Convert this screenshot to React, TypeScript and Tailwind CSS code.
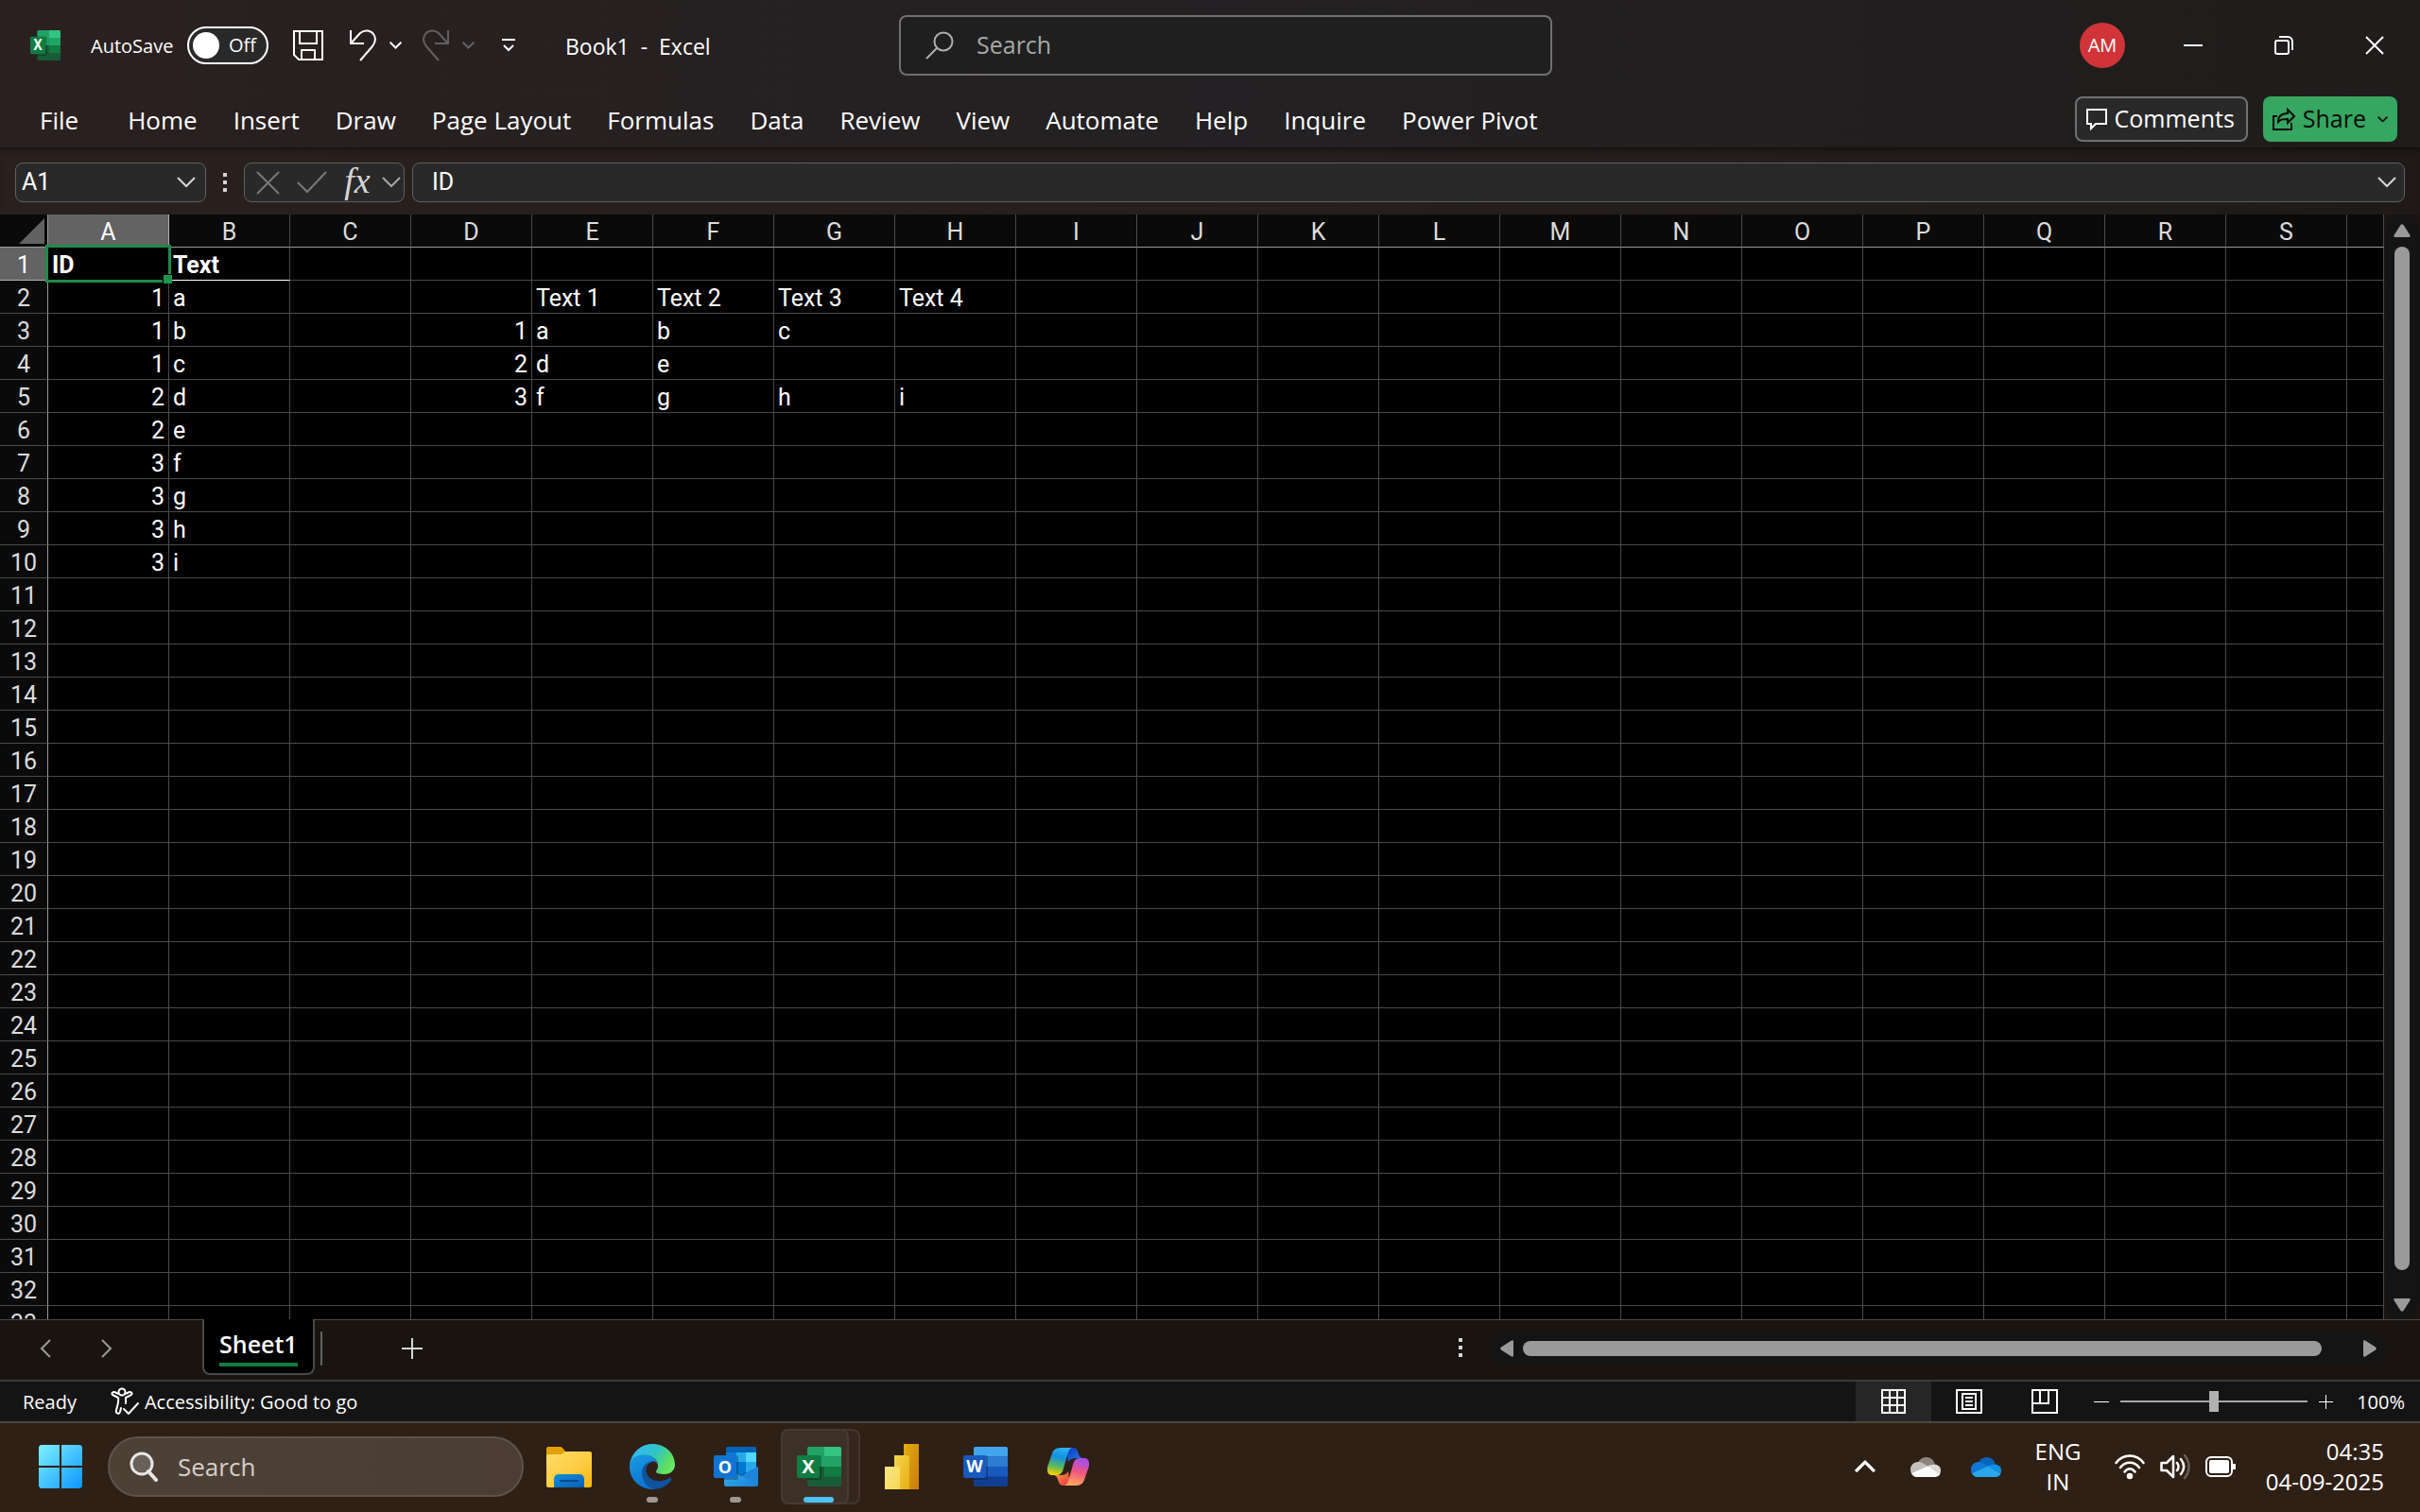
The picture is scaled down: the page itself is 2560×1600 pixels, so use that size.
import React from "react";

const COLS = "ABCDEFGHIJKLMNOPQRS".split("");
const ROWS = Array.from({ length: 33 }, (_, i) => i + 1);

const CELLS: Record<string, string | number> = {
  A1: "ID", B1: "Text",
  A2: 1, B2: "a",
  A3: 1, B3: "b",
  A4: 1, B4: "c",
  A5: 2, B5: "d",
  A6: 2, B6: "e",
  A7: 3, B7: "f",
  A8: 3, B8: "g",
  A9: 3, B9: "h",
  A10: 3, B10: "i",
  E2: "Text 1", F2: "Text 2", G2: "Text 3", H2: "Text 4",
  D3: 1, E3: "a", F3: "b", G3: "c",
  D4: 2, E4: "d", F4: "e",
  D5: 3, E5: "f", F5: "g", G5: "h", H5: "i",
};

const TABS = [
  "File", "Home", "Insert", "Draw", "Page Layout", "Formulas", "Data",
  "Review", "View", "Automate", "Help", "Inquire", "Power Pivot",
];

function Chevron({ className = "", w = 20, sw = 2 }: { className?: string; w?: number; sw?: number }) {
  return (
    <svg width={w} height={w * 0.6} viewBox="0 0 20 12" fill="none" stroke="currentColor" strokeWidth={sw} className={className} aria-hidden="true">
      <path d="M1 1l9 9 9-9" />
    </svg>
  );
}

function ExcelIcon({ className }: { className: string }) {
  return (
    <svg viewBox="0 0 47 42" className={className} aria-hidden="true" preserveAspectRatio="none">
      <rect x="11" y="0" width="36" height="42" rx="2" fill="#185c37" />
      <path d="M13 0h16v21H11V2a2 2 0 0 1 2-2z" fill="#21a366" />
      <path d="M29 0h16a2 2 0 0 1 2 2v8.500H29z" fill="#33c481" />
      <path d="M29 10.500h18V21H29z" fill="#21a366" />
      <path d="M29 21h18v10.500H29z" fill="#107c41" />
      <path d="M11 9h13a2 2 0 0 1 2 2v22a2 2 0 0 1-2 2H11z" fill="#000" opacity=".25" />
      <rect x="0" y="9" width="24" height="24" rx="2" fill="#107c41" />
      <text x="12" y="28" textAnchor="middle" fontSize="20" fontWeight="700" fill="#fff" fontFamily="Open Sans, sans-serif">X</text>
    </svg>
  );
}

function WordIcon() {
  return (
    <svg viewBox="0 0 47 42" className="h-[42px] w-[47px]" aria-hidden="true">
      <rect x="11" y="0" width="36" height="42" rx="2" fill="#103f91" />
      <path d="M13 0h32a2 2 0 0 1 2 2v8.500H11V2a2 2 0 0 1 2-2z" fill="#41a5ee" />
      <path d="M11 10.500h36V21H11z" fill="#2b7cd3" />
      <path d="M11 21h36v10.500H11z" fill="#185abd" />
      <path d="M11 9h13a2 2 0 0 1 2 2v22a2 2 0 0 1-2 2H11z" fill="#000" opacity=".25" />
      <rect x="0" y="9" width="24" height="24" rx="2" fill="#185abd" />
      <text x="12" y="27" textAnchor="middle" fontSize="18" fontWeight="700" fill="#fff" fontFamily="Open Sans, sans-serif">W</text>
    </svg>
  );
}

function OutlookIcon() {
  return (
    <svg viewBox="0 0 47 42" className="h-[42px] w-[47px]" aria-hidden="true">
      <defs>
        <linearGradient id="env" x1="0" y1="0" x2="1" y2="1">
          <stop offset="0" stopColor="#35b8f1" />
          <stop offset="1" stopColor="#1a7fd8" />
        </linearGradient>
      </defs>
      <path d="M15 0h28a2 2 0 0 1 2 2v30H13V2a2 2 0 0 1 2-2z" fill="#0a4a8c" />
      <path d="M15 0h28a2 2 0 0 1 2 2v4H13V2a2 2 0 0 1 2-2z" fill="#0364b8" />
      <path d="M13 6h11v10H13z" fill="#0f78d4" />
      <path d="M24 6h10v10H24z" fill="#28a8ea" />
      <path d="M34 6h11v10H34z" fill="#50d9ff" />
      <path d="M13 16h11v12H13z" fill="#0364b8" />
      <path d="M24 16h10v11l-5 3-5-2z" fill="#0078d4" />
      <path d="M34 16h11v6l-11 6z" fill="#28a8ea" />
      <path d="M47 21v19a2 2 0 0 1-2 2H13a2 2 0 0 1-2-2V21l18 10z" fill="url(#env)" />
      <path d="M29 31l18-10v19z" fill="#1b86dc" />
      <path d="M11 9h13a2 2 0 0 1 2 2v22a2 2 0 0 1-2 2H11z" fill="#000" opacity=".25" />
      <rect x="0" y="9" width="24" height="24" rx="2" fill="#1174d4" />
      <text x="12" y="28" textAnchor="middle" fontSize="18" fontWeight="700" fill="#fff" fontFamily="Open Sans, sans-serif">O</text>
    </svg>
  );
}

function EdgeIcon() {
  return (
    <svg viewBox="0 0 48 48" className="size-12" aria-hidden="true">
      <defs>
        <linearGradient id="edgeTop" x1="0" y1=".3" x2="1" y2=".7">
          <stop offset="0" stopColor="#35b5f5" />
          <stop offset=".5" stopColor="#2fc5c4" />
          <stop offset=".85" stopColor="#5fdf5c" />
          <stop offset="1" stopColor="#66eb6e" />
        </linearGradient>
        <linearGradient id="edgeBlue" x1="0" y1="0" x2=".4" y2="1">
          <stop offset="0" stopColor="#1b9de2" />
          <stop offset="1" stopColor="#0a74d2" />
        </linearGradient>
      </defs>
      <path d="M13 31C12 22 18 17 26 18c-7 2-10 7-8 13 2 6 9 9 16 8 5-.5 8-3 9-3s2 1 1 2.500C40 44 33 48 25 48 18 46 13 39 13 31z" fill="#0f539f" />
      <path d="M0 24C0 15 7 11 14 11c9 0 15 5 15.500 11C28.500 18.500 26 17.500 23 18.500 16 20 13 25 13 31c.500 8 5 14 12 17C11 48 0 38 0 24z" fill="url(#edgeBlue)" />
      <path d="M0 22C2 9 12 0 24 0c14 0 24 10 24 22 0 6-5 10-11 10-5 0-9-1-9-2.500s2-2.500 2-6.500c0-7-7-11.500-15-11.500S1 16 0 22z" fill="url(#edgeTop)" />
    </svg>
  );
}

function FolderIcon() {
  return (
    <svg viewBox="0 0 48 43" className="h-[43px] w-12" aria-hidden="true">
      <defs>
        <linearGradient id="fold" x1="0" y1="0" x2="1" y2="1">
          <stop offset="0" stopColor="#ffdc6b" />
          <stop offset=".6" stopColor="#fdcb3e" />
          <stop offset="1" stopColor="#f6b60f" />
        </linearGradient>
        <linearGradient id="fold2" x1="0" y1="0" x2="1" y2="1">
          <stop offset="0" stopColor="#1390dc" />
          <stop offset="1" stopColor="#0a5eb4" />
        </linearGradient>
      </defs>
      <path d="M0 2a2 2 0 0 1 2-2h12c3 0 4 2 6 5v6H0z" fill="#e3a008" />
      <path d="M0 10a2 2 0 0 1 2-2h13c3 0 3-3 6-3h25a2 2 0 0 1 2 2v34a2 2 0 0 1-2 2H2a2 2 0 0 1-2-2z" fill="url(#fold)" />
      <path d="M8 43V34a5 5 0 0 1 5-5h22a5 5 0 0 1 5 5v9z" fill="url(#fold2)" />
      <path d="M15 36h18" stroke="#07478a" strokeWidth="2" strokeLinecap="round" />
    </svg>
  );
}

function PowerBiIcon() {
  return (
    <svg viewBox="0 0 36 48" className="h-12 w-9" aria-hidden="true">
      <defs>
        <linearGradient id="pb1" x1="0" y1="0" x2="1" y2="1"><stop offset="0" stopColor="#e6ad10" /><stop offset="1" stopColor="#c87a0e" /></linearGradient>
        <linearGradient id="pb2" x1="0" y1="0" x2="1" y2="1"><stop offset="0" stopColor="#f6d751" /><stop offset="1" stopColor="#e6ad10" /></linearGradient>
        <linearGradient id="pb3" x1="0" y1="0" x2="1" y2="1"><stop offset="0" stopColor="#f9e589" /><stop offset="1" stopColor="#f6d751" /></linearGradient>
      </defs>
      <path d="M20 0h16v48H20z" fill="url(#pb1)" />
      <path d="M10 12h14a2 2 0 0 1 2 2v34H10z" fill="url(#pb2)" />
      <path d="M0 24h14a2 2 0 0 1 2 2v22H0z" fill="url(#pb3)" />
    </svg>
  );
}

function CopilotIcon() {
  return (
    <svg viewBox="0 0 44 40" className="h-10 w-11" aria-hidden="true">
      <defs>
        <linearGradient id="cp1" x1=".6" y1="0" x2=".4" y2="1">
          <stop offset="0" stopColor="#2bb3f5" /><stop offset=".35" stopColor="#1290e0" /><stop offset=".7" stopColor="#5cb85a" /><stop offset="1" stopColor="#f5d000" />
        </linearGradient>
        <linearGradient id="cp2" x1="0" y1="0" x2="1" y2="1">
          <stop offset="0" stopColor="#1237c4" /><stop offset="1" stopColor="#1a80e8" />
        </linearGradient>
        <linearGradient id="cp3" x1=".6" y1="0" x2=".4" y2="1">
          <stop offset="0" stopColor="#a04df0" /><stop offset=".5" stopColor="#f0567f" /><stop offset="1" stopColor="#ffa958" />
        </linearGradient>
        <linearGradient id="cp4" x1="0" y1="0" x2="1" y2="1">
          <stop offset="0" stopColor="#ffa04a" /><stop offset="1" stopColor="#e0393e" />
        </linearGradient>
      </defs>
      <path d="M20 0h7c4 0 5 3 6 6.500 1 3 2 4.500 5 4.500h-8c-4 0-6 1-8 4z" fill="url(#cp2)" />
      <path d="M24 40h-7c-4 0-5-3-6-6.500C10 30.500 9 29 6 29h8c4 0 6-1 8-4z" fill="url(#cp4)" />
      <path d="M15 0h11c-3 1-4 4-5 8l-4 14c-1 4-3 7-7 7H5c-5 0-6-5-4.500-10L5 6C6.500 2 9 0 15 0z" fill="url(#cp1)" />
      <path d="M29 40H18c3-1 4-4 5-8l4-14c1-4 3-7 7-7h5c5 0 6 5 4.500 10L39 34c-1.500 4-4 6-10 6z" fill="url(#cp3)" />
    </svg>
  );
}

function Cloud({ c, label }: { c: [string, string, string, string]; label: string }) {
  return (
    <button aria-label={label}>
      <svg viewBox="0 0 32 21" className="h-[21px] w-8">
        <path d="M7 8C9 2 13 0 17 0c5 0 8 4 9 8l-8 4z" fill={c[0]} />
        <path d="M7 21c-4 0-7-3-7-8 0-4 3-8 8-8 3 0 5 1 11 5L2 18z" fill={c[1]} />
        <path d="M18 10c3-3 14-4 14 4 0 2-.5 4-2 5.500z" fill={c[2]} />
        <path d="M1.500 17L18 9.500l13 8.500c-1 2-3 3-5 3H7c-2.500 0-4.500-1.500-5.500-4z" fill={c[3]} />
      </svg>
    </button>
  );
}

function Dots() {
  return (
    <svg width="4" height="21" viewBox="0 0 4 21" fill="#d4d4d4" aria-hidden="true">
      <path d="M0 0h4v4H0zM0 8h4v4H0zM0 16h4v4H0z" />
    </svg>
  );
}

function TitleBar() {
  return (
    <div className="grid h-24 grid-cols-[951fr_691fr_918fr] items-center">
      <div className="flex items-center pl-8 text-[20px]">
        <ExcelIcon className="h-8 w-8" />
        <label className="ml-8 flex items-center gap-3">
          <span className="w-[90px] whitespace-nowrap pt-0.5">AutoSave</span>
          <input type="checkbox" role="switch" className="peer sr-only" />
          <span className="flex h-10 w-[86px] items-center gap-2.5 rounded-full border-2 border-white bg-[#292929] pl-1">
            <span className="size-7 rounded-full bg-white" />
            <span>Off</span>
          </span>
        </label>
        <button aria-label="Save" className="ml-[26px]">
          <svg width="32" height="32" viewBox="0 0 32 32" fill="none" stroke="#fff" strokeWidth="2">
            <path d="M1 1h30v30H6l-5-5zM7 1v13h18V1M9 31V21h14v10" />
          </svg>
        </button>
        <button aria-label="Undo" className="ml-[26px]">
          <svg width="32" height="34" viewBox="0 0 32 34" fill="none" stroke="#fff" strokeWidth="2">
            <path d="M3 1v14h14M3 15L13 4C18 0 24 1 27 5s2 9-1 13L13 33" />
          </svg>
        </button>
        <button aria-label="Undo options" className="ml-3"><Chevron w={13} sw={3} /></button>
        <button aria-label="Redo" className="ml-5">
          <svg width="32" height="34" viewBox="0 0 32 34" fill="none" stroke="#626060" strokeWidth="2">
            <path d="M29 1v14H15M29 15L19 4C14 0 8 1 5 5s-2 9 1 13l13 15" />
          </svg>
        </button>
        <button aria-label="Redo options" className="ml-3 text-[#626060]"><Chevron w={13} sw={3} /></button>
        <button aria-label="Customize Quick Access Toolbar" className="ml-7">
          <svg width="16" height="14" viewBox="0 0 16 14" fill="none" stroke="#fff" strokeWidth="2">
            <path d="M1 1h14M3 7l5 5 5-5" />
          </svg>
        </button>
        <span className="ml-[52px] whitespace-pre pt-0.5 text-[23px]">Book1  -  Excel</span>
      </div>
      <label className="flex h-16 items-center rounded-lg border-2 border-[#717171] bg-[#1f1f1f] pl-[26px]">
        <svg width="30" height="30" viewBox="0 0 30 30" fill="none" stroke="#b0b0b0" strokeWidth="2" aria-hidden="true">
          <circle cx="19" cy="11" r="9.500" />
          <path d="M12 18L1 29" />
        </svg>
        <input aria-label="Search" placeholder="Search" className="ml-6 flex-1 bg-transparent text-[25px] outline-none placeholder:text-[#a8a8a8]" />
      </label>
      <div className="flex items-center justify-end pr-[38px]">
        <button className="size-12 rounded-full bg-[#d13438] text-[20px]">AM</button>
        <button aria-label="Minimize" className="ml-[62px] flex h-5 w-5 items-center"><span className="h-0.5 w-full bg-white" /></button>
        <button aria-label="Restore" className="ml-[76px]">
          <svg width="20" height="20" viewBox="0 0 20 20" fill="none" stroke="#fff" strokeWidth="2">
            <rect x="1" y="5" width="14" height="14" rx="2" />
            <path d="M5 1h9a5 5 0 0 1 5 5v9" />
          </svg>
        </button>
        <button aria-label="Close" className="ml-[76px]">
          <svg width="20" height="20" viewBox="0 0 20 20" stroke="#fff" strokeWidth="2"><path d="M1 1l18 18M19 1L1 19" /></svg>
        </button>
      </div>
    </div>
  );
}

function TabRow() {
  return (
    <div className="flex h-[60px] items-center pr-6 pl-[42px] text-[26px]">
      <nav className="flex gap-[38px] pt-0.5">
        {TABS.map((t) => <button key={t} className="whitespace-nowrap first:mr-3.5">{t}</button>)}
      </nav>
      <button className="ml-auto flex h-12 items-center gap-2 rounded-lg border-2 border-[#717171] bg-[#292929] px-2.5 text-[25px]">
        <svg width="22" height="24" viewBox="0 0 22 24" fill="none" stroke="#fff" strokeWidth="2" aria-hidden="true">
          <path d="M1 2h20v15H10l-5 5v-5H1z" />
        </svg>
        <span className="pr-0.5">Comments</span>
      </button>
      <button className="ml-4 flex h-12 items-center gap-2 rounded-lg bg-[#36a660] px-2.5 text-[25px] text-[#0a0a0a]">
        <svg width="24" height="24" viewBox="0 0 24 24" fill="none" stroke="#0a0a0a" strokeWidth="2" aria-hidden="true">
          <path d="M5 9H1v14h19v-7" />
          <path d="M6 15c0-6 4-9 10-9V2l7 7-7 7v-4c-5 0-7 0-10 3z" />
        </svg>
        Share
        <Chevron w={11} sw={3} className="ml-1" />
      </button>
    </div>
  );
}

function FormulaBar() {
  return (
    <div className="flex h-[71px] items-start bg-linear-to-r from-[#2a201e] via-[#261f1d] to-[#1f1a18] pt-4 pr-4 pl-4 text-[25px] shadow-[inset_0_6px_6px_-4px_rgba(0,0,0,0.5)]">
      <label className="flex h-[42px] w-[202px] items-center rounded-lg border border-[#616161] bg-[#292929] pr-2.5 pl-1.5">
        <input aria-label="Name Box" defaultValue="A1" className="min-w-0 flex-1 bg-transparent font-[Roboto,sans-serif] outline-none" />
        <Chevron className="text-[#d6d6d6]" />
      </label>
      <div className="ml-[18px] flex h-[42px] items-center"><Dots /></div>
      <div className="ml-[18px] flex h-[42px] w-[170px] items-center rounded-lg border border-[#616161] bg-[#292929] pl-3">
        <button aria-label="Cancel">
          <svg width="25" height="25" viewBox="0 0 25 25" stroke="#7a7a7a" strokeWidth="2"><path d="M1 1l23 23M24 1L1 24" /></svg>
        </button>
        <button aria-label="Enter" className="ml-[18px]">
          <svg width="32" height="24" viewBox="0 0 32 24" fill="none" stroke="#7a7a7a" strokeWidth="2"><path d="M1 12l10 10L31 1" /></svg>
        </button>
        <button aria-label="Insert Function" className="ml-[18px] w-7 pb-1 font-['Liberation_Serif',serif] text-[38px] leading-9 text-[#d6d6d6] italic">fx</button>
        <button aria-label="Function options" className="ml-3"><Chevron className="text-[#a8a8a8]" /></button>
      </div>
      <label className="ml-2 flex h-[42px] flex-1 items-center rounded-lg border border-[#616161] bg-[#292929] pr-2 pl-5">
        <input aria-label="Formula Bar" defaultValue="ID" className="min-w-0 flex-1 bg-transparent font-[Roboto,sans-serif] outline-none" />
        <Chevron className="text-[#d6d6d6]" />
      </label>
    </div>
  );
}

function cellClass(id: string, v: string | number | undefined, row: number) {
  const base = "relative h-[35px] border-r border-b pt-1 pb-0 leading-[30px]";
  const border = id === "B1" ? "border-r-[#4a4a4a] border-b-white" : "border-[#4a4a4a]";
  const align = typeof v === "number" ? "pr-1 pl-0 text-right" : "pr-0 pl-1 text-left";
  return `${base} ${border} ${align} ${row === 1 ? "font-bold" : "font-normal"}`;
}

function Sheet() {
  return (
    <div className="flex min-h-0 flex-1">
      <div className="min-w-0 flex-1 overflow-hidden bg-black">
        <table className="w-full table-fixed border-separate border-spacing-0 font-[Roboto,sans-serif] text-[25px] text-white">
          <colgroup>
            <col className="w-[51px]" />
            {COLS.map((c) => <col key={c} className="w-32" />)}
            <col />
          </colgroup>
          <thead>
            <tr className="bg-[#0a0a0a] text-[#dcdcdc]">
              <th className="h-[35px] border-r border-b border-[#9a9a9a] p-0">
                <button aria-label="Select all" className="block pl-5">
                  <svg width="27" height="27" viewBox="0 0 27 27" fill="#616161"><path d="M27 0v27H0z" /></svg>
                </button>
              </th>
              {COLS.map((c) => (
                <th key={c} scope="col" className={c === "A" ? "border-r border-b border-[#b0b0b0] bg-[#636363] px-0 pt-1 pb-0 leading-[30px] font-normal text-white" : "border-r border-b border-r-[#4a4a4a] border-b-[#9a9a9a] px-0 pt-1 pb-0 leading-[30px] font-normal"}>{c}</th>
              ))}
              <th className="border-r border-b border-r-[#4a4a4a] border-b-[#9a9a9a] p-0" />
            </tr>
          </thead>
          <tbody>
            {ROWS.map((r) => (
              <tr key={r}>
                <th scope="row" className={r === 1 ? "h-[35px] border-r border-b border-[#b0b0b0] bg-[#636363] px-0 pt-1 pb-0 leading-[30px] font-normal" : "h-[35px] border-r border-b border-r-[#9a9a9a] border-b-[#4a4a4a] bg-[#0a0a0a] px-0 pt-1 pb-0 leading-[30px] font-normal text-[#dcdcdc]"}>{r}</th>
                {COLS.map((c) => {
                  const id = c + r;
                  const v = CELLS[id];
                  return (
                    <td key={c} className={cellClass(id, v, r)}>
                      {v}
                      {id === "A1" && (
                        <span className="pointer-events-none absolute -inset-[3px] z-10 border-3 border-[#1f8a4c]">
                          <span className="absolute -right-1 -bottom-1 size-2.5 border-t border-l border-black bg-[#1f9650]" />
                        </span>
                      )}
                    </td>
                  );
                })}
                <td className="border-r border-b border-[#4a4a4a] p-0" />
              </tr>
            ))}
          </tbody>
        </table>
      </div>
      <div className="flex w-[38px] flex-col bg-[#1b1512] pr-0.5 pl-0.5">
        <div className="flex min-h-0 flex-1 flex-col items-center rounded-full bg-[#141414] pt-2.5 pb-2">
          <button aria-label="Scroll up">
            <svg width="18" height="14" viewBox="0 0 18 14" fill="#9a9a9a" className="block"><path d="M7.500 1c1-1 2-1 3 0l7 11c.5 1 0 2-1 2h-15c-1 0-1.500-1-1-2z" /></svg>
          </button>
          <div className="mt-2.5 mb-2 w-4 flex-1 rounded-full bg-[#9a9a9a]" />
          <button aria-label="Scroll down" className="mt-[22px]">
            <svg width="18" height="14" viewBox="0 0 18 14" fill="#9a9a9a" className="block"><path d="M7.500 13c1 1 2 1 3 0l7-11c.5-1 0-2-1-2h-15c-1 0-1.500 1-1 2z" /></svg>
          </button>
        </div>
      </div>
    </div>
  );
}

function SheetBar() {
  return (
    <div className="flex h-16 items-center border-t border-[#4a4a4a] bg-[#19140f] pb-1">
      <button aria-label="Previous sheet" className="ml-[42px]">
        <svg width="12" height="20" viewBox="0 0 12 20" fill="none" stroke="#9a9a9a" strokeWidth="2"><path d="M11 1l-9 9 9 9" /></svg>
      </button>
      <button aria-label="Next sheet" className="ml-[53px]">
        <svg width="12" height="20" viewBox="0 0 12 20" fill="none" stroke="#9a9a9a" strokeWidth="2"><path d="M1 1l9 9-9 9" /></svg>
      </button>
      <button className="-mt-px ml-[95px] flex h-[59px] items-start self-start rounded-b-lg border-x-2 border-b-2 border-[#4a4a4a] bg-black px-4 pt-1.5 text-[25px] font-semibold">
        <span className="block border-b-4 border-[#107c41] leading-10">Sheet1</span>
      </button>
      <span className="ml-1.5 h-9 w-0.5 bg-[#616161]" />
      <button aria-label="New sheet" className="ml-[84px]">
        <svg width="22" height="22" viewBox="0 0 22 22" stroke="#d6d6d6" strokeWidth="2"><path d="M11 0v22M0 11h22" /></svg>
      </button>
      <div className="ml-auto flex w-[1017px] items-center">
        <Dots />
        <div className="mr-9 ml-[30px] flex h-[34px] flex-1 items-center rounded-full bg-[#141414] px-2.5">
          <button aria-label="Scroll left">
            <svg width="14" height="18" viewBox="0 0 14 18" fill="#9a9a9a"><path d="M1 7.500c-1 1-1 2 0 3l11 7c1 .5 2 0 2-1v-15c0-1-1-1.500-2-1z" /></svg>
          </button>
          <div className="mr-11 ml-2.5 h-4 flex-1 rounded-full bg-[#9a9a9a]" />
          <button aria-label="Scroll right">
            <svg width="14" height="18" viewBox="0 0 14 18" fill="#9a9a9a"><path d="M13 7.500c1 1 1 2 0 3l-11 7c-1 .5-2 0-2-1v-15c0-1 1-1.500 2-1z" /></svg>
          </button>
        </div>
      </div>
    </div>
  );
}

function StatusBar() {
  return (
    <div className="flex h-11 items-center border-t-2 border-[#3a3a3a] bg-[#141414] text-[20px]">
      <span className="ml-6 pt-0.5">Ready</span>
      <button className="ml-9 flex items-center gap-1.5">
        <svg width="30" height="30" viewBox="0 0 30 30" fill="none" stroke="#fff" strokeWidth="2" strokeLinecap="round" strokeLinejoin="round" aria-hidden="true">
          <circle cx="12" cy="5" r="3.500" />
          <path d="M8.500 7L4 5C2 4.500 0 7 3 8.500l5 2.500c1 4-.5 8-2 13-1 4 3 5 4 2l1-4M15.500 7L20 5c2-.5 4 2 1 3.500L16 11v6M14 23l5 5L29 17" />
        </svg>
        <span className="pt-0.5">Accessibility: Good to go</span>
      </button>
      <button aria-label="Normal view" className="ml-auto flex h-full w-20 items-center justify-center bg-[#262626]">
        <svg width="26" height="26" viewBox="0 0 26 26" fill="none" stroke="#fff" strokeWidth="2"><path d="M1 1h24v24H1zM9 1v24M17 1v24M1 9h24M1 17h24" /></svg>
      </button>
      <button aria-label="Page layout view" className="flex h-full w-20 items-center justify-center">
        <svg width="28" height="26" viewBox="0 0 28 26" fill="none" stroke="#fff" strokeWidth="2"><path d="M1 1h26v24H1zM7 5h14v16H7zM10 9h8M10 13h8M10 17h8" /></svg>
      </button>
      <button aria-label="Page break view" className="flex h-full w-20 items-center justify-center">
        <svg width="28" height="26" viewBox="0 0 28 26" fill="none" stroke="#fff" strokeWidth="2"><path d="M1 1h26v24H1zM9 1v14M1 15h17V1" /></svg>
      </button>
      <button aria-label="Zoom out" className="ml-3 flex h-4 w-4 items-center"><span className="h-px w-full bg-white" /></button>
      <input
        type="range"
        aria-label="Zoom"
        defaultValue={50}
        className="mx-3 h-6 w-[198px] appearance-none bg-transparent [&::-webkit-slider-runnable-track]:h-0.5 [&::-webkit-slider-runnable-track]:bg-[#a8a8a8] [&::-webkit-slider-thumb]:-mt-2.5 [&::-webkit-slider-thumb]:h-[22px] [&::-webkit-slider-thumb]:w-2.5 [&::-webkit-slider-thumb]:appearance-none [&::-webkit-slider-thumb]:bg-[#b0b0b0]"
      />
      <button aria-label="Zoom in">
        <svg width="15" height="15" viewBox="0 0 15 15" stroke="#fff" strokeWidth="1"><path d="M7.500 0v15M0 7.500h15" /></svg>
      </button>
      <button className="mr-4 w-[76px] pt-0.5 text-right">100%</button>
    </div>
  );
}

function TaskbarApp({ label, dot, children }: { label: string; dot?: boolean; children: React.ReactNode }) {
  return (
    <button aria-label={label} className="relative flex h-20 w-[88px] items-center justify-center">
      {children}
      {dot && <span className="absolute bottom-0.5 h-1.5 w-3 rounded-full bg-[#a09890]" />}
    </button>
  );
}

function Taskbar() {
  return (
    <div className="flex h-24 items-center border-t-2 border-[#4f463b] bg-[#2f2016] pb-0.5">
      <button aria-label="Start" className="ml-[41px]">
        <svg width="46" height="46" viewBox="0 0 46 46">
          <defs>
            <linearGradient id="win" x1="0" y1="0" x2="46" y2="46" gradientUnits="userSpaceOnUse">
              <stop offset="0" stopColor="#7ef0ff" /><stop offset=".5" stopColor="#46c4ff" /><stop offset="1" stopColor="#0a94ff" />
            </linearGradient>
          </defs>
          <path d="M2 0h20v22H0V2zM24 0h20l2 2v20H24zM0 24h22v22H2l-2-2zM24 24h22v20l-2 2H24z" fill="url(#win)" />
        </svg>
      </button>
      <label className="ml-[27px] flex h-16 w-[440px] items-center rounded-full border-2 border-[#5f534a] bg-linear-to-r from-[#4d4136] to-[#4b3d34] pl-[21px]">
        <svg width="30" height="32" viewBox="0 0 30 32" fill="none" stroke="#e6e6e6" aria-hidden="true">
          <circle cx="13" cy="13" r="11" strokeWidth="3" fill="#6b6058" />
          <path d="M20 21l8 9" strokeWidth="4" strokeLinecap="round" />
        </svg>
        <input aria-label="Search Windows" placeholder="Search" className="ml-[21px] w-60 bg-transparent text-[26px] outline-none placeholder:text-[#d6cfc9]" />
      </label>
      <div className="ml-1 flex items-center">
        <TaskbarApp label="File Explorer"><FolderIcon /></TaskbarApp>
        <TaskbarApp label="Edge" dot><EdgeIcon /></TaskbarApp>
        <TaskbarApp label="Outlook" dot><OutlookIcon /></TaskbarApp>
        <TaskbarApp label="Excel">
          <span className="absolute inset-y-0 right-0 left-1 rounded-lg border-2 border-[#43362c] border-l-transparent bg-[#35271d]" />
          <span className="absolute inset-y-0 right-3 left-1 rounded-lg border-2 border-[#483b31] bg-[#3d3026]" />
          <span className="relative"><ExcelIcon className="h-[42px] w-[47px]" /></span>
          <span className="absolute bottom-0.5 h-1.5 w-8 rounded-full bg-[#4cc2ff]" />
        </TaskbarApp>
        <TaskbarApp label="Power BI"><PowerBiIcon /></TaskbarApp>
        <TaskbarApp label="Word"><WordIcon /></TaskbarApp>
        <TaskbarApp label="Copilot"><CopilotIcon /></TaskbarApp>
      </div>
      <div className="ml-auto flex items-center pr-[38px] text-[24px] leading-8">
        <button aria-label="Show hidden icons" className="mr-[37px]"><Chevron w={22} sw={3} className="rotate-180" /></button>
        <Cloud label="OneDrive personal" c={["#8c857e", "#c4c0bc", "#dddad7", "#ffffff"]} />
        <span className="w-8" />
        <Cloud label="OneDrive" c={["#0864b8", "#0f78d4", "#1490df", "#28a8ea"]} />
        <button className="ml-[30px] w-[60px] text-center">ENG<br />IN</button>
        <button aria-label="Network, volume and battery" className="ml-[30px] flex items-center gap-4">
          <svg width="32" height="28" viewBox="0 0 32 28" fill="none" stroke="#fff" strokeWidth="2.500" strokeLinecap="round">
            <path d="M1.500 10C9 0 23 0 30.500 10M6 15c5-7 15-7 20 0M10.500 19.500c3-4.500 8-4.500 11 0" />
            <circle cx="16" cy="24" r="2" fill="#fff" />
          </svg>
          <svg width="32" height="28" viewBox="0 0 32 28" fill="none" stroke="#fff" strokeWidth="2.500" strokeLinecap="round" strokeLinejoin="round">
            <path d="M1.500 10v8H7l7 7V3L7 10zM18 10c2 2 2 6 0 8M22 6c4 5 4 11 0 16" />
            <path d="M26 2c6 7 6 17 0 24" stroke="#6b5f55" />
          </svg>
          <svg width="33" height="22" viewBox="0 0 33 22" fill="none" stroke="#fff" strokeWidth="2">
            <rect x="1" y="1" width="27" height="20" rx="5" />
            <rect x="5" y="5" width="19" height="12" rx="1" fill="#fff" />
            <path d="M30 8v6" strokeWidth="4" />
          </svg>
        </button>
        <button className="ml-7 w-32 text-right whitespace-nowrap">04:35<br />04-09-2025</button>
      </div>
    </div>
  );
}

export default function App() {
  return (
    <div className="flex h-screen flex-col overflow-hidden bg-black font-['Open_Sans',sans-serif] text-white">
      <header className="bg-linear-to-r from-[#2a201f] via-[#232123] via-50% to-[#1f1c1b]">
        <TitleBar />
        <TabRow />
      </header>
      <FormulaBar />
      <Sheet />
      <SheetBar />
      <StatusBar />
      <Taskbar />
    </div>
  );
}
